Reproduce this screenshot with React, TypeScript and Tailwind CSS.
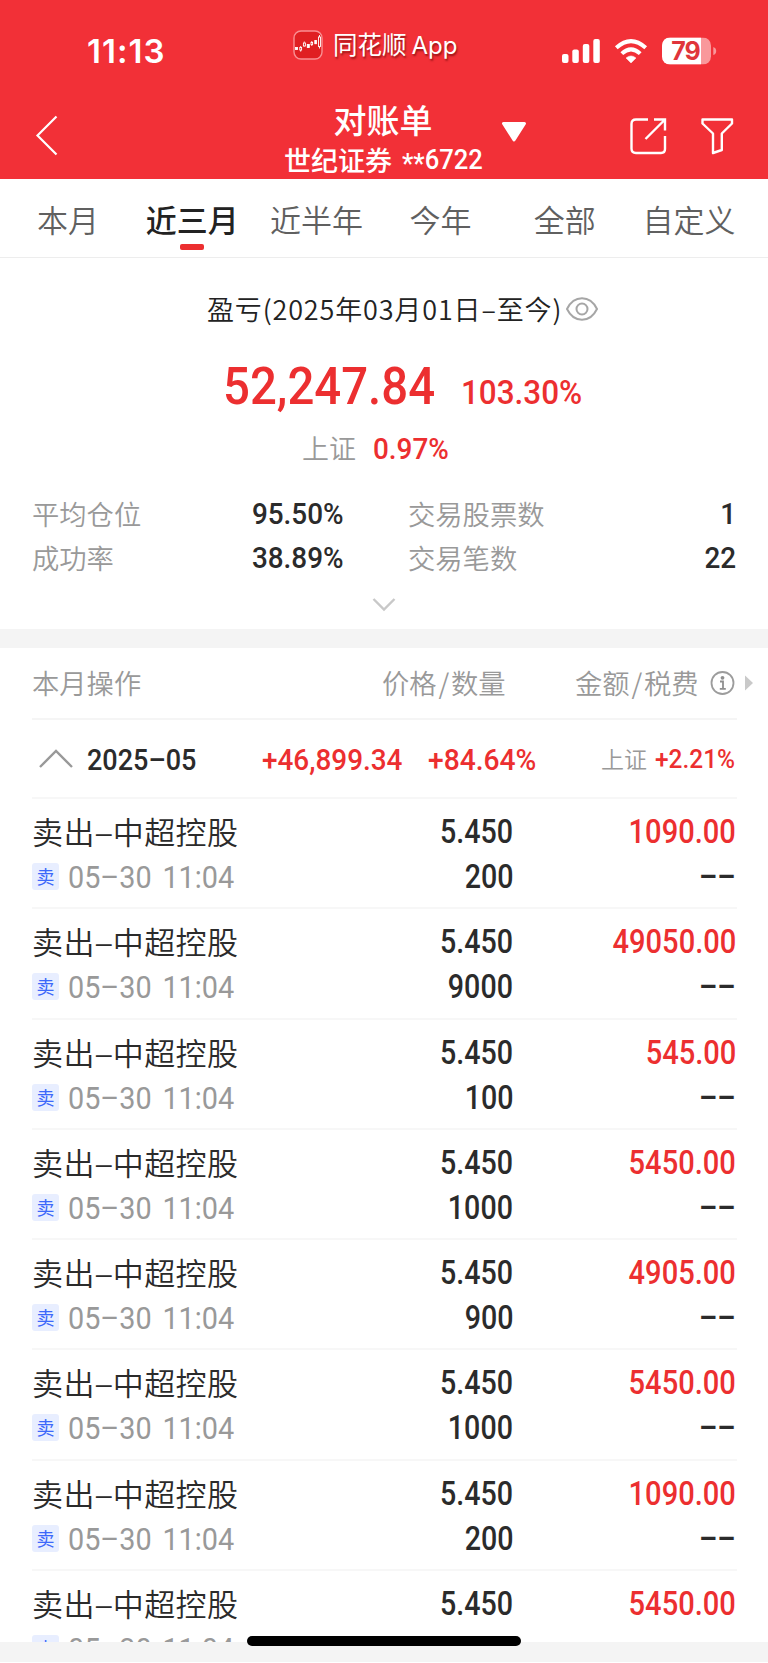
import React from "react";

const cjk = "font-['Noto_Sans_CJK_SC',sans-serif]";
const numFont = "font-[Roboto,'Noto_Sans_CJK_SC',sans-serif]";
const num = `inline-block ${numFont}`;

const tabs = ["本月", "近三月", "近半年", "今年", "全部", "自定义"];

const trades = [
  { qty: "200", amount: "1090.00" },
  { qty: "9000", amount: "49050.00" },
  { qty: "100", amount: "545.00" },
  { qty: "1000", amount: "5450.00" },
  { qty: "900", amount: "4905.00" },
  { qty: "1000", amount: "5450.00" },
  { qty: "200", amount: "1090.00" },
  { qty: "1000", amount: "5450.00" },
];

function AppLogo() {
  return (
    <svg width="30" height="30" viewBox="0 0 30 30" className="block">
      <rect x="1" y="1" width="28" height="28" rx="7" fill="#e01f22" stroke="#f98f92" strokeWidth="1.4" />
      <g fill="#fff" stroke="#fff" strokeWidth="0.9">
        <rect x="2.5" y="17.5" width="2" height="2" />
        <rect x="6.8" y="17.5" width="1.8" height="2.5" fill="none" />
        <path d="M7.7 16v1.5M7.7 20v1.6M11.3 11.5v1.2M11.3 16v.5" />
        <rect x="10.4" y="13" width="2" height="3" fill="none" />
        <rect x="14.3" y="14.5" width="2" height="3" />
        <rect x="18" y="12.5" width="1.6" height="2" fill="none" />
        <path d="M18.8 11v1.4M18.8 14.8v1.2" />
        <rect x="21.8" y="10.5" width="1.6" height="3.2" />
        <rect x="25.5" y="7" width="2" height="9.5" fill="none" />
        <path d="M26.5 5v2M26.5 16.5v2" />
      </g>
    </svg>
  );
}

function StatusBar() {
  return (
    <div className="flex h-[88px] text-white">
      <div className="w-[293px] shrink-0 pl-[87px] pt-[30px] font-[Inter,sans-serif] text-[33px] font-semibold leading-[42px] tracking-[1px]">
        11:13
      </div>
      <div className="w-[268px] shrink-0 flex pt-[30px] gap-[10px]">
        <AppLogo />
        <div className="font-[Inter,'Noto_Sans_CJK_SC',sans-serif] text-[24.5px] leading-[30px] font-normal whitespace-nowrap [text-shadow:1px_2px_2px_rgba(90,0,0,0.6)]">
          同花顺<span className="ml-[5px] text-[24px]">App</span>
        </div>
      </div>
      <svg width="160" height="30" viewBox="0 0 160 30" className="mt-[36px] block">
        <g fill="#fff">
          <rect x="1" y="18" width="6.5" height="9" rx="2" />
          <rect x="11.3" y="13.5" width="6.5" height="13.5" rx="2" />
          <rect x="21.8" y="8" width="6.5" height="19" rx="2" />
          <rect x="32.3" y="3" width="6.5" height="24" rx="2" />
          <path d="M70 27 L65 22 Q70 17.800 75 22 Z" strokeLinejoin="round" stroke="#fff" strokeWidth="0.5" />
        </g>
        <g fill="none" stroke="#fff" strokeWidth="4">
          <path d="M55.300 11.800 Q70 -1.500 84.700 11.800" />
          <path d="M60.800 17.600 Q70 9 79.200 17.600" />
        </g>
        <clipPath id="cell"><rect x="101" y="1.500" width="49" height="27" rx="8" /></clipPath>
        <g clipPath="url(#cell)">
          <rect x="101" y="1.500" width="49" height="27" fill="#f9989b" />
          <rect x="101" y="1.500" width="39" height="27" fill="#fff" />
        </g>
        <path d="M152.300 11 Q155.200 12 155.200 15 Q155.200 18 152.300 19 Z" fill="#f9989b" />
        <text x="124.500" y="24" textAnchor="middle" fill="#e0343a" className="font-[Inter,sans-serif] text-[25px] font-bold tracking-[-1px]">79</text>
      </svg>
    </div>
  );
}

function NavBar() {
  return (
    <div className="flex h-[91px] text-white">
      <svg width="284" height="91" viewBox="0 0 284 91" className="block shrink-0">
        <path d="M56.500 28.500 L37.500 47.500 L56.500 66.500" fill="none" stroke="#fff" strokeWidth="2.200" />
      </svg>
      <div className={`${cjk} w-[198px] shrink-0 flex flex-col whitespace-nowrap`}>
        <div className="mt-[11px] text-center text-[33px] leading-[40px] font-medium">对账单</div>
        <div className="flex items-center h-[38px] mt-[2px] text-[27px] font-medium leading-[38px]">
          世纪证券
          <span className={`${num} ml-[10px] w-[80px] origin-left scale-x-[0.93] text-[27.5px] font-medium`}>
            <span className="relative top-[4px]">**</span>6722
          </span>
        </div>
      </div>
      <svg width="286" height="91" viewBox="482 88 286 91" className="block shrink-0">
        <path d="M503.500 123.500 H524.500 L514 140 Z" fill="#fff" stroke="#fff" strokeWidth="3" strokeLinejoin="round" />
        <g fill="none" stroke="#fff" strokeWidth="2.400">
          <path d="M648 119.500 H636 Q631.500 119.500 631.500 124 V148.500 Q631.500 153 636 153 H661 Q665 153 665 149 V136" />
          <path d="M654 119.500 H665 V130.500 M664.500 120 L645.500 139" />
          <path d="M702.500 119.500 H732 V123.500 L721.800 133.500 V150 L713 153 V133.500 L702.500 123.500 Z" strokeLinejoin="round" />
        </g>
      </svg>
    </div>
  );
}

function Tabs() {
  return (
    <div className={`${cjk} flex h-[79px] shrink-0 pl-[6px] pr-[17px] border-b border-[#ededed]`}>
      {tabs.map((t, i) => (
        <div key={t} className="flex-1 flex flex-col items-center whitespace-nowrap">
          <div
            className={
              i === 1
                ? "mt-[17px] h-[48px] text-[31px] leading-[45px] font-medium text-[#222]"
                : "mt-[17px] h-[48px] text-[31px] leading-[45px] font-[350] text-[#606060]"
            }
          >
            {t}
          </div>
          {i === 1 && <div className="w-[24px] h-[6px] rounded-[2px] bg-[#ec2f30]" />}
        </div>
      ))}
    </div>
  );
}

function Stat({ label, value }: { label: string; value: string }) {
  return (
    <div className="flex justify-between items-center h-[44px] whitespace-nowrap">
      <span className="text-[27.3px] font-[350] text-[#999]">{label}</span>
      <span className={`${num} origin-right scale-x-[0.93] mt-px mr-[-1px] text-[30px] font-medium text-[#2b2b2b]`}>{value}</span>
    </div>
  );
}

function Summary() {
  return (
    <div className={`${cjk} h-[371px] shrink-0 whitespace-nowrap`}>
      <div className="flex items-center h-[40px] mt-[31px] pl-[207px]">
        <span className="w-[358px] text-[27px] font-[350] text-[#222] tracking-[0.850px]">盈亏(2025年03月01日–至今)</span>
        <svg width="34" height="26" viewBox="0 0 34 26" fill="none" stroke="#a6a6a6" strokeWidth="2" className="block">
          <path d="M2 13 C9 -1.300 25 -1.300 32 13 C25 27.300 9 27.300 2 13 Z" />
          <circle cx="17" cy="13" r="5.500" />
        </svg>
      </div>
      <div className="flex items-baseline mt-[26px] pl-[223px] h-[64px] font-medium text-[#ec2f30]">
        <span className={`${num} origin-left scale-x-[0.928] w-[238px] text-[51px] leading-[64px]`}>52,247.84</span>
        <span className={`${num} origin-left scale-x-[0.925] text-[34px]`}>103.30%</span>
      </div>
      <div className="flex items-center h-[40px] mt-[9px] pl-[302px]">
        <span className="w-[71px] text-[27px] font-[350] text-[#999]">上证</span>
        <span className={`${num} origin-left scale-x-[0.93] mt-px text-[30px] font-medium text-[#ec2f30]`}>0.97%</span>
      </div>
      <div className="flex mt-[23px] pl-[32px] pr-[33px]">
        <div className="w-[311px]">
          <Stat label="平均仓位" value="95.50%" />
          <Stat label="成功率" value="38.89%" />
        </div>
        <div className="ml-[65px] flex-1">
          <Stat label="交易股票数" value="1" />
          <Stat label="交易笔数" value="22" />
        </div>
      </div>
      <div className="flex justify-center mt-[18px]">
        <svg width="24" height="16" viewBox="0 0 24 16" fill="none" stroke="#c8c8c8" strokeWidth="2.400">
          <path d="M1.500 2 L12 12.500 L22.500 2" />
        </svg>
      </div>
    </div>
  );
}

function ListHeader() {
  return (
    <div className={`${cjk} ml-[32px] w-[705px] h-[72px] shrink-0 border-b-2 border-[#f5f5f5] flex items-center whitespace-nowrap text-[27.300px] font-[350] text-[#999]`}>
      <span className="w-[350px] shrink-0 mb-[2px]">本月操作</span>
      <span className="w-[193px] shrink-0 mb-[2px]">价格<span className="mx-[1.800px]">/</span>数量</span>
      <span className="w-[135px] shrink-0 mb-[2px]">金额<span className="mx-[1.800px]">/</span>税费</span>
      <svg width="44" height="26" viewBox="0 0 44 26" className="block shrink-0">
        <circle cx="12.500" cy="13" r="11" fill="none" stroke="#9c9c9c" strokeWidth="1.800" />
        <circle cx="12.500" cy="7.800" r="1.900" fill="#8f8f8f" />
        <path d="M10 11.500 H13 V18.500 M9.800 18.800 H15.800" fill="none" stroke="#8f8f8f" strokeWidth="1.800" />
        <path d="M35 5.500 L43 13 L35 20.500 Z" fill="#c9c9c9" />
      </svg>
    </div>
  );
}

function MonthRow() {
  return (
    <div className="ml-[32px] w-[705px] h-[79px] shrink-0 border-b-2 border-[#f7f7f7] flex items-center whitespace-nowrap text-[30px] font-medium text-[#ec2f30]">
      <svg width="55" height="24" viewBox="0 0 55 24" fill="none" stroke="#999" strokeWidth="2.400" className="block shrink-0">
        <path d="M8 20 L24 4 L40 20" />
      </svg>
      <span className={`${num} mt-[2px] w-[175px] shrink-0 origin-left scale-x-[0.9] text-[#2b2b2b]`}>2025–05</span>
      <span className={`${num} mt-[2px] w-[166px] shrink-0 origin-left scale-x-[0.93]`}>+46,899.34</span>
      <span className={`${num} mt-[2px] w-[173px] shrink-0 origin-left scale-x-[0.94]`}>+84.64%</span>
      <span className={`${cjk} w-[54px] shrink-0 text-[23px] font-[350] text-[#999]`}>上证</span>
      <span className={`${num} mt-px w-[82px] shrink-0 origin-left scale-x-[0.94] text-[26px]`}>+2.21%</span>
    </div>
  );
}

function TradeRow({ qty, amount }: { qty: string; amount: string }) {
  return (
    <div className="ml-[32px] w-[705px] h-[110.250px] shrink-0 border-b-2 border-[#f7f7f7] pt-[10px] flex whitespace-nowrap">
      <div className="w-[280px]">
        <div className={`${cjk} h-[45px] leading-[44px] text-[31px] font-[350] text-[#2b2b2b] tracking-[0.400px]`}>
          卖出<span className="inline-block text-center w-[18px] scale-x-[1.15]">–</span>中超控股
        </div>
        <div className="flex items-center h-[45px]">
          <span className={`${cjk} w-[27px] h-[27px] rounded-[3px] bg-[#e8eeff] text-[#3c68fa] text-[18px] leading-[27px] text-center`}>
            卖
          </span>
          <span className={`${num} ml-[9px] mt-px origin-left scale-x-[0.9] text-[32px] text-[#999] [word-spacing:4px]`}>05–30 11:04</span>
        </div>
      </div>
      <div className={`${numFont} w-[201px] mt-px flex flex-col items-end text-[32.500px] leading-[45px] font-medium text-[#2b2b2b]`}>
        <div className="origin-right scale-x-[0.88]">5.450</div>
        <div className="origin-right scale-x-[0.88]">{qty}</div>
      </div>
      <div className={`${numFont} w-[223px] mt-px flex flex-col items-end text-[32.500px] leading-[45px] font-medium`}>
        <div className="origin-right scale-x-[0.895] text-[#ec2f30]">{amount}</div>
        <div className="origin-right scale-x-[0.88] text-[#2b2b2b]">––</div>
      </div>
    </div>
  );
}

export default function App() {
  return (
    <div className="w-[768px] h-[1663px] bg-white overflow-hidden flex flex-col relative">
      <header className="h-[179px] shrink-0 bg-[#f23037]">
        <StatusBar />
        <NavBar />
      </header>
      <Tabs />
      <Summary />
      <div className="h-[19px] shrink-0 bg-[#f4f4f4]" />
      <ListHeader />
      <MonthRow />
      <div className="flex flex-col h-[843px] shrink-0 overflow-hidden">
        {trades.map((t, i) => (
          <TradeRow key={i} {...t} />
        ))}
      </div>
      <div className="h-[20px] shrink-0 bg-[#f4f4f4]" />
      <div className="absolute left-[247px] top-[1636px] w-[274px] h-[10px] rounded-full bg-black" />
    </div>
  );
}
